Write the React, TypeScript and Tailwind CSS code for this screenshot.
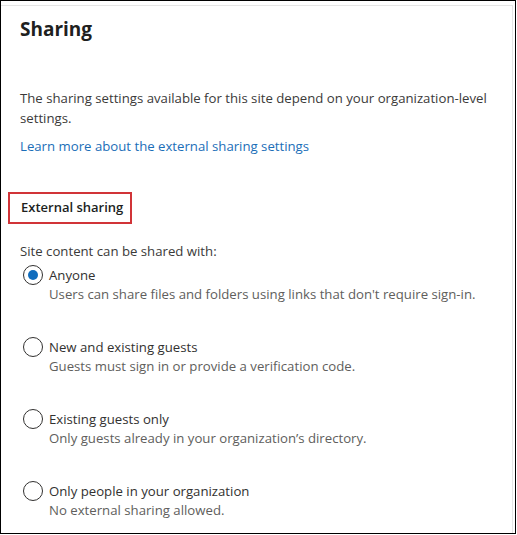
const OPTIONS = [
  { label: 'Anyone', desc: "Users can share files and folders using links that don't require sign-in.", checked: true },
  { label: 'New and existing guests', desc: 'Guests must sign in or provide a verification code.', checked: false },
  { label: 'Existing guests only', desc: 'Only guests already in your organization’s directory.', checked: false },
  { label: 'Only people in your organization', desc: 'No external sharing allowed.', checked: false },
];

function Radio({ checked }: { checked: boolean }) {
  return (
    <div className="w-5 h-5 rounded-full border border-[#323130] flex items-center justify-center shrink-0 bg-white">
      {checked && <div className="w-[10px] h-[10px] rounded-full bg-[#0f6cbd]" />}
    </div>
  );
}

export default function App() {
  return (
    <div className="w-[517px] h-[535px] bg-white" style={{ fontFamily: '"Open Sans", "Noto Sans", sans-serif' }}>
      <div className="w-[516px] h-[534px] border border-black overflow-hidden">
        <div className="h-full border-t border-r border-[#e5e5e5] mt-1 mr-[2px] px-[19px] text-[#323130]">
          <h1 className="text-[19px] font-bold text-[#201f1e] pt-[9px] leading-[28px]">Sharing</h1>
          <p className="mt-[45px] text-[13.2px] leading-[20px] text-[#3b3a39]">
            The sharing settings available for this site depend on your organization-level settings.
          </p>
          <a className="block mt-[8px] text-[13.2px] leading-[20px] text-[#1b6eb8]">Learn more about the external sharing settings</a>
          <div className="mt-[36px] -ml-[12px] w-[124px] h-[32px] border-2 border-[#d13438] flex items-center pl-[11px]">
            <span className="text-[13px] font-semibold text-[#201f1e]">External sharing</span>
          </div>
          <p className="mt-[17px] text-[13.2px] leading-[20px] text-[#3b3a39]">Site content can be shared with:</p>
          <div className="mt-[4px] flex flex-col gap-[33px]">
            {OPTIONS.map(o => (
              <div key={o.label} className="flex gap-[6px] ml-[3px]">
                <Radio checked={o.checked} />
                <div className="text-[13.2px] leading-[20px]">
                  <div className="text-[#323130]">{o.label}</div>
                  <div className="text-[#605e5c] -mt-[1px]">{o.desc}</div>
                </div>
              </div>
            ))}
          </div>
        </div>
      </div>
    </div>
  );
}
